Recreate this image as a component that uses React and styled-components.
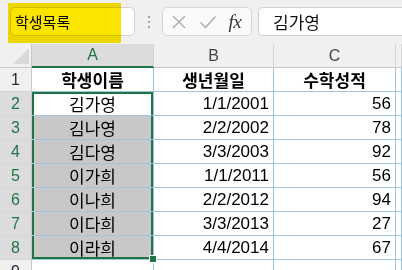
import React from "react";
import styled, { createGlobalStyle } from "styled-components";

const GlobalStyle = createGlobalStyle`
  html, body {
    margin: 0;
    padding: 0;
    background: #ffffff;
    overflow: hidden;
  }
`;

const GREEN = "#217346";
const GRID = "#9dc3e6";
const KR = `"Noto Sans CJK KR", "Noto Sans", sans-serif`;
const LATIN = `"Liberation Sans", Arial, sans-serif`;

const Page = styled.div`
  width: 402px;
  height: 270px;
  overflow: hidden;
  background: #ffffff;
  display: flex;
  flex-direction: column;
`;

const FormulaBar = styled.div`
  height: 44px;
  box-sizing: border-box;
  background: #f0f0f0;
  display: flex;
  align-items: flex-start;
  padding: 7px 0 0 10px;
`;

const NameBox = styled.div`
  position: relative;
  width: 125px;
  height: 29px;
  box-sizing: border-box;
  background: #ffffff;
  border: 1px solid #d2d2d2;
  border-radius: 5px;
  display: flex;
  align-items: center;
  padding-left: 4px;
  font-family: ${KR};
  font-size: 15px;
  color: #000;

  &::before {
    content: "";
    position: absolute;
    left: -3px;
    top: -5px;
    width: 113px;
    height: 40px;
    background: #fbe400;
    mix-blend-mode: multiply;
    pointer-events: none;
  }
`;

const Dots = styled.div`
  width: 27px;
  height: 29px;
  display: flex;
  flex-direction: column;
  align-items: center;
  justify-content: center;
  gap: 3px;

  span {
    width: 2px;
    height: 2px;
    background: #8a8a8a;
    border-radius: 1px;
  }
`;

const Buttons = styled.div`
  width: 90px;
  height: 29px;
  box-sizing: border-box;
  background: #fafafa;
  border: 1px solid #d6d6d6;
  border-radius: 5px;
  display: flex;
  align-items: center;
  justify-content: space-around;
  padding: 0 4px 0 2px;
`;

const Fx = styled.span`
  font-family: "Liberation Serif", "Times New Roman", serif;
  font-style: italic;
  font-size: 19px;
  color: #333;
  letter-spacing: -0.5px;
`;

const Input = styled.div`
  flex: 1;
  height: 29px;
  margin-left: 6px;
  box-sizing: border-box;
  background: #ffffff;
  border: 1px solid #d2d2d2;
  border-right: none;
  border-radius: 5px 0 0 5px;
  display: flex;
  align-items: center;
  padding-left: 14px;
  font-family: ${KR};
  font-size: 17px;
  color: #111;
`;

const Sheet = styled.div`
  flex: 1;
  display: grid;
  grid-template-columns: 32px 122px 120px 122px 1fr;
  grid-auto-rows: 24px;
  overflow: hidden;
`;

const Corner = styled.div`
  background: #f0f0f0;
  border-right: 1px solid #c8c8c8;
  border-bottom: 1px solid #c8c8c8;
  box-sizing: border-box;
  display: flex;
  align-items: flex-end;
  justify-content: flex-end;
  padding: 0 2px 3px 0;

  &::after {
    content: "";
    width: 0;
    height: 0;
    border-left: 16px solid transparent;
    border-bottom: 16px solid #d9d9d9;
  }
`;

const ColHead = styled.div`
  box-sizing: border-box;
  background: ${(p) => (p.$sel ? "#dcdcdc" : "#f0f0f0")};
  border-right: 1px solid #d4d4d4;
  border-bottom: ${(p) => (p.$sel ? `2px solid ${GREEN}` : "1px solid #c8c8c8")};
  display: flex;
  align-items: center;
  justify-content: center;
  font-family: ${LATIN};
  font-size: 16px;
  color: ${(p) => (p.$sel ? GREEN : "#444")};
`;

const RowHead = styled.div`
  box-sizing: border-box;
  background: ${(p) => (p.$sel ? "#dcdcdc" : "#f0f0f0")};
  border-right: 1px solid #c8c8c8;
  border-bottom: 1px solid #d4d4d4;
  display: flex;
  align-items: center;
  justify-content: center;
  font-family: ${LATIN};
  font-size: 16px;
  color: ${(p) => (p.$sel ? GREEN : "#2b2b40")};
`;

const selShadow = {
  top: `inset 2px 2px 0 ${GREEN}, inset -2px 0 0 ${GREEN}`,
  mid: `inset 2px 0 0 ${GREEN}, inset -2px 0 0 ${GREEN}`,
  bottom: `inset 2px -2px 0 ${GREEN}, inset -2px 0 0 ${GREEN}`,
};

const Cell = styled.div`
  position: relative;
  box-sizing: border-box;
  border-right: 1px solid ${GRID};
  border-bottom: 1px solid ${GRID};
  background: ${(p) => (p.$shade ? "#c8c8c8" : "#ffffff")};
  box-shadow: ${(p) => (p.$sel ? selShadow[p.$sel] : "none")};
  display: flex;
  align-items: center;
  justify-content: ${(p) => (p.$num ? "flex-end" : "center")};
  padding-right: ${(p) => (p.$num ? "4px" : "0")};
  font-family: ${(p) => (p.$num ? LATIN : KR)};
  font-size: 17px;
  font-weight: ${(p) => (p.$bold ? 700 : 400)};
  color: #000;
  white-space: nowrap;
`;

const Handle = styled.span`
  position: absolute;
  right: -4px;
  bottom: -4px;
  width: 6px;
  height: 6px;
  background: ${GREEN};
  border: 1px solid #fff;
  z-index: 2;
`;

const rows = [
  ["김가영", "1/1/2001", 56],
  ["김나영", "2/2/2002", 78],
  ["김다영", "3/3/2003", 92],
  ["이가희", "1/1/2011", 56],
  ["이나희", "2/2/2012", 94],
  ["이다희", "3/3/2013", 27],
  ["이라희", "4/4/2014", 67],
];

const CloseIcon = () => (
  <svg width="16" height="16" viewBox="0 0 16 16">
    <path d="M2 2 L14 14 M14 2 L2 14" stroke="#a8a8a8" strokeWidth="1.3" fill="none" />
  </svg>
);

const CheckIcon = () => (
  <svg width="18" height="16" viewBox="0 0 18 16">
    <path d="M1.5 8.5 L6.5 13.5 L16.5 2.5" stroke="#a8a8a8" strokeWidth="1.3" fill="none" />
  </svg>
);

const App = () => {
  const last = rows.length - 1;
  return (
    <Page>
      <GlobalStyle />
      <FormulaBar>
        <NameBox>학생목록</NameBox>
        <Dots>
          <span />
          <span />
          <span />
        </Dots>
        <Buttons>
          <CloseIcon />
          <CheckIcon />
          <Fx>fx</Fx>
        </Buttons>
        <Input>김가영</Input>
      </FormulaBar>
      <Sheet>
        <Corner />
        <ColHead $sel>A</ColHead>
        <ColHead>B</ColHead>
        <ColHead>C</ColHead>
        <ColHead />

        <RowHead>1</RowHead>
        <Cell $bold>학생이름</Cell>
        <Cell $bold>생년월일</Cell>
        <Cell $bold>수학성적</Cell>
        <Cell />

        {rows.map(([name, date, score], i) => (
          <React.Fragment key={name}>
            <RowHead $sel>{i + 2}</RowHead>
            <Cell
              $shade={i > 0}
              $sel={i === 0 ? "top" : i === last ? "bottom" : "mid"}
            >
              {name}
              {i === last && <Handle />}
            </Cell>
            <Cell $num>{date}</Cell>
            <Cell $num>{score}</Cell>
            <Cell />
          </React.Fragment>
        ))}

        <RowHead>9</RowHead>
        <Cell />
        <Cell />
        <Cell />
        <Cell />
      </Sheet>
    </Page>
  );
};

export default App;
